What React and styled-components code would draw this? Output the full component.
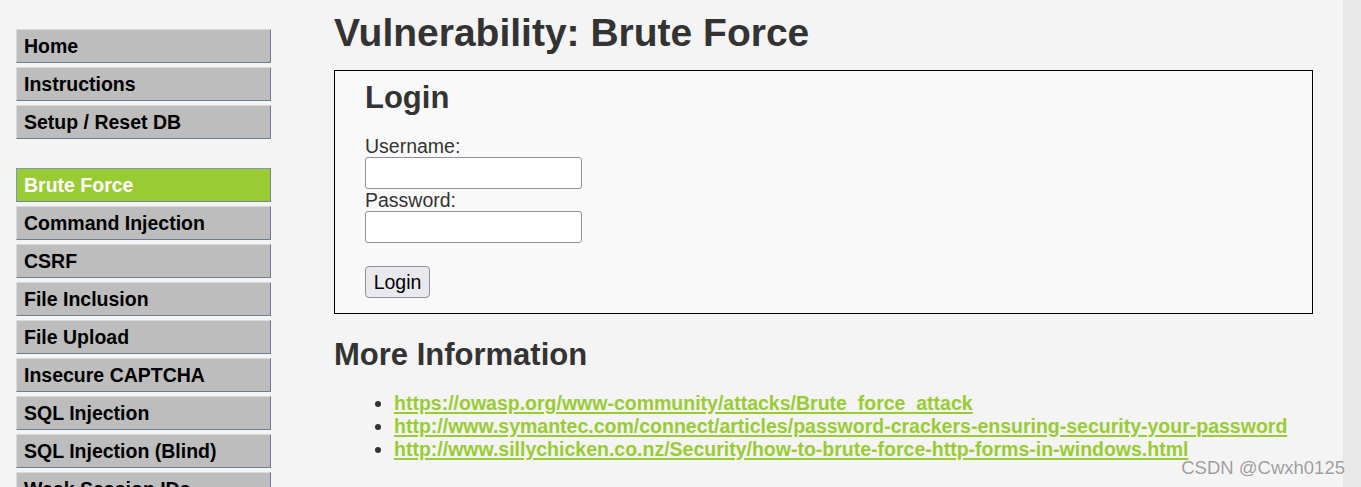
import React from "react";
import styled, { createGlobalStyle } from "styled-components";

const GlobalStyle = createGlobalStyle`
  html, body {
    margin: 0;
    padding: 0;
    height: 100%;
    overflow: hidden;
    background: #f4f4f4;
    font-family: "Liberation Sans", Arial, sans-serif;
  }
  #root { height: 100%; }
`;

const Page = styled.div`
  position: relative;
  display: flex;
  height: 100%;
  background: #f4f4f4;
  color: #333;
`;

const Content = styled.div`
  flex: 1;
  display: flex;
  align-items: flex-start;
`;

const ScrollStrip = styled.div`
  width: 18px;
  flex: none;
  background: #e8e8e8;
`;

const Sidebar = styled.nav`
  flex: none;
  width: 255px;
  padding: 29px 0 0 16px;
  margin-right: 63px;
  display: flex;
  flex-direction: column;
`;

const MenuGroup = styled.ul`
  list-style: none;
  margin: 0 0 29px 0;
  padding: 0;
  display: flex;
  flex-direction: column;
  gap: 4px;
`;

const MenuItem = styled.li`
  display: block;
  height: 32px;
  line-height: 32px;
  padding-left: 7px;
  font-size: 19.5px;
  font-weight: bold;
  white-space: nowrap;
  overflow: hidden;
  background: ${(p) => (p.$selected ? "#99cc33" : "#bdbdbd")};
  color: ${(p) => (p.$selected ? "#ffffff" : "#000000")};
  border-style: solid;
  border-width: 1px;
  border-color: ${(p) =>
    p.$selected
      ? "#8195c2 #6f80a3 #6f80a3 #8195c2"
      : "#dadada #6c7b96 #6c7b96 #dadada"};
`;

const Main = styled.main`
  flex: none;
  width: 979px;
  display: flex;
  flex-direction: column;
`;

const Title = styled.h1`
  margin: 10px 0 15px;
  font-size: 39px;
  line-height: 45px;
  font-weight: bold;
  color: #333;
`;

const VulnArea = styled.div`
  border: 1px solid #000;
  background: #f8f9f8;
  padding: 9px 30px 15px;
  display: flex;
  flex-direction: column;
  align-items: flex-start;
`;

const SubTitle = styled.h2`
  margin: ${(p) => p.$margin || "0"};
  font-size: 31px;
  line-height: 36px;
  font-weight: bold;
  color: #333;
`;

const Label = styled.label`
  font-size: 19.5px;
  line-height: 22px;
  color: #333;
`;

const TextInput = styled.input`
  box-sizing: border-box;
  width: 217px;
  height: 32px;
  margin: 0;
  padding: 2px 6px;
  border: 1px solid #8f8f9d;
  border-radius: 3px;
  background: #fff;
  font-size: 19.5px;
  font-family: inherit;
`;

const Spacer = styled.div`
  height: 23px;
`;

const Button = styled.button`
  box-sizing: border-box;
  width: 65px;
  height: 32px;
  margin: 0;
  padding: 0;
  border: 1px solid #8f8f9d;
  border-radius: 4px;
  background: #e9e9ed;
  color: #000;
  font-size: 19.5px;
  font-family: inherit;
`;

const LinkList = styled.ul`
  margin: 19px 0 0;
  padding-left: 60px;
  list-style: disc;
  font-size: 19.5px;
  line-height: 23px;
  color: #333;
`;

const LinkItem = styled.li``;

const Link = styled.a`
  color: #99cc33;
  font-weight: bold;
  text-decoration: underline;
  text-decoration-thickness: 2px;
  text-underline-offset: 2px;
`;

const Watermark = styled.div`
  position: absolute;
  right: 16px;
  bottom: 9px;
  font-size: 18.5px;
  line-height: 20px;
  color: #9e9e9e;
  text-shadow: 0 0 1px #fff;
`;

const groups = [
  [{ label: "Home" }, { label: "Instructions" }, { label: "Setup / Reset DB" }],
  [
    { label: "Brute Force", selected: true },
    { label: "Command Injection" },
    { label: "CSRF" },
    { label: "File Inclusion" },
    { label: "File Upload" },
    { label: "Insecure CAPTCHA" },
    { label: "SQL Injection" },
    { label: "SQL Injection (Blind)" },
    { label: "Weak Session IDs" },
  ],
];

const links = [
  "https://owasp.org/www-community/attacks/Brute_force_attack",
  "http://www.symantec.com/connect/articles/password-crackers-ensuring-security-your-password",
  "http://www.sillychicken.co.nz/Security/how-to-brute-force-http-forms-in-windows.html",
];

export default function App() {
  return (
    <>
      <GlobalStyle />
      <Page>
        <Content>
          <Sidebar>
            {groups.map((g, i) => (
              <MenuGroup key={i}>
                {g.map((item) => (
                  <MenuItem key={item.label} $selected={item.selected}>
                    {item.label}
                  </MenuItem>
                ))}
              </MenuGroup>
            ))}
          </Sidebar>
          <Main>
            <Title>Vulnerability: Brute Force</Title>
            <VulnArea>
              <SubTitle $margin="0 0 19px">Login</SubTitle>
              <Label>Username:</Label>
              <TextInput type="text" name="username" />
              <Label>Password:</Label>
              <TextInput type="password" name="password" />
              <Spacer />
              <Button type="button">Login</Button>
            </VulnArea>
            <SubTitle $margin="23px 0 0">More Information</SubTitle>
            <LinkList>
              {links.map((l) => (
                <LinkItem key={l}>
                  <Link href={l}>{l}</Link>
                </LinkItem>
              ))}
            </LinkList>
          </Main>
        </Content>
        <ScrollStrip />
        <Watermark>CSDN @Cwxh0125</Watermark>
      </Page>
    </>
  );
}
